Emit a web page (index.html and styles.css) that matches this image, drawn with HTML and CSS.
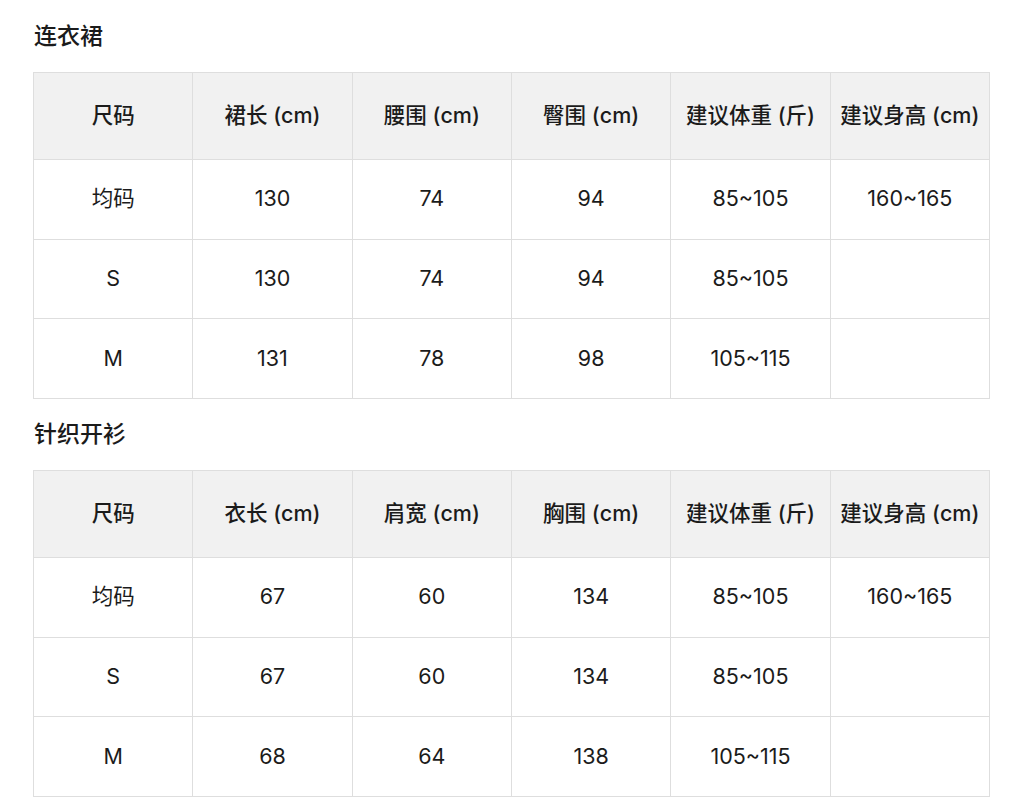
FILE: index.html
```html
<!DOCTYPE html>
<html lang="zh-CN">
<head>
<meta charset="utf-8">
<title>尺码表</title>
<link rel="stylesheet" href="styles.css">
</head>
<body>
<div class="page">
  <section class="section">
    <h2 class="title">连衣裙</h2>
    <table class="size-table">
      <thead>
        <tr><th>尺码</th><th>裙长 (cm)</th><th>腰围 (cm)</th><th>臀围 (cm)</th><th>建议体重 (斤)</th><th>建议身高 (cm)</th></tr>
      </thead>
      <tbody>
        <tr><td>均码</td><td>130</td><td>74</td><td>94</td><td>85~105</td><td>160~165</td></tr>
        <tr><td>S</td><td>130</td><td>74</td><td>94</td><td>85~105</td><td></td></tr>
        <tr><td>M</td><td>131</td><td>78</td><td>98</td><td>105~115</td><td></td></tr>
      </tbody>
    </table>
  </section>
  <section class="section">
    <h2 class="title">针织开衫</h2>
    <table class="size-table">
      <thead>
        <tr><th>尺码</th><th>衣长 (cm)</th><th>肩宽 (cm)</th><th>胸围 (cm)</th><th>建议体重 (斤)</th><th>建议身高 (cm)</th></tr>
      </thead>
      <tbody>
        <tr><td>均码</td><td>67</td><td>60</td><td>134</td><td>85~105</td><td>160~165</td></tr>
        <tr><td>S</td><td>67</td><td>60</td><td>134</td><td>85~105</td><td></td></tr>
        <tr><td>M</td><td>68</td><td>64</td><td>138</td><td>105~115</td><td></td></tr>
      </tbody>
    </table>
  </section>
</div>
</body>
</html>
```

FILE: styles.css
```css
html, body {
  margin: 0;
  padding: 0;
  background: #ffffff;
}
body {
  font-family: "Inter", "Noto Sans CJK SC", sans-serif;
  color: #1b1b1b;
}
.page {
  padding: 0 34px 0 33px;
}
.section {
  display: flex;
  flex-direction: column;
}
.title {
  margin: 21px 0 20px 1px;
  height: 31px;
  line-height: 31px;
  font-size: 23px;
  font-weight: 500;
}
.section + .section .title {
  margin-top: 20px;
}
.size-table {
  width: 957px;
  border-collapse: collapse;
  table-layout: fixed;
}
.size-table th,
.size-table td {
  border: 1px solid #dedede;
  text-align: center;
  vertical-align: middle;
  padding: 0 0 2px;
  font-size: 21.5px;
  line-height: 26px;
}
.size-table th {
  height: 84px;
  background: #f1f1f1;
  font-weight: 500;
}
.size-table td {
  height: 76.7px;
  font-weight: 400;
}
```
